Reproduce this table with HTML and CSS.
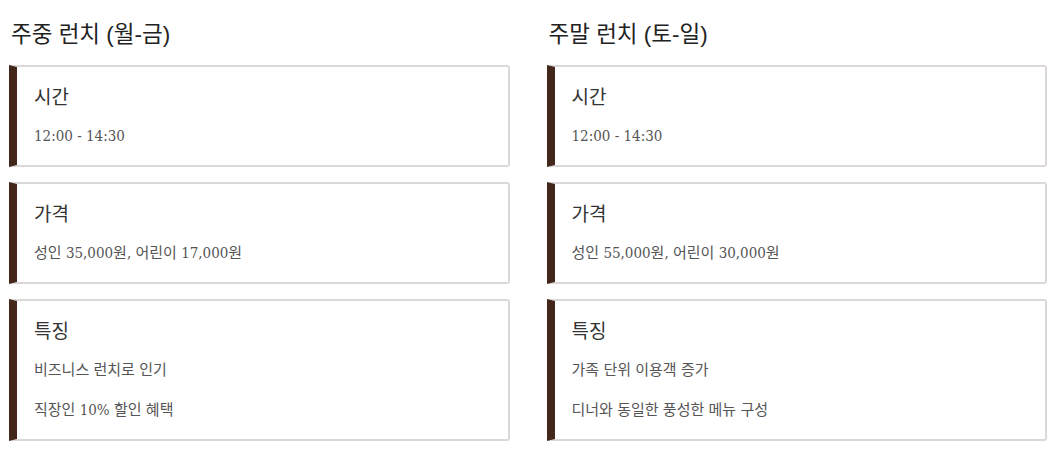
FILE: index.html
```html
<!DOCTYPE html>
<html lang="ko">
<head>
<meta charset="utf-8">
<link rel="stylesheet" href="styles.css">
</head>
<body>
<div class="grid">
  <section class="col">
    <h2 class="col-title">주중 런치 (월-금)</h2>
    <div class="card">
      <h3 class="card-title">시간</h3>
      <p class="card-text">12:00 - 14:30</p>
    </div>
    <div class="card">
      <h3 class="card-title">가격</h3>
      <p class="card-text">성인 35,000원, 어린이 17,000원</p>
    </div>
    <div class="card">
      <h3 class="card-title">특징</h3>
      <p class="card-text">비즈니스 런치로 인기</p>
      <p class="card-text">직장인 10% 할인 혜택</p>
    </div>
  </section>
  <section class="col">
    <h2 class="col-title">주말 런치 (토-일)</h2>
    <div class="card">
      <h3 class="card-title">시간</h3>
      <p class="card-text">12:00 - 14:30</p>
    </div>
    <div class="card">
      <h3 class="card-title">가격</h3>
      <p class="card-text">성인 55,000원, 어린이 30,000원</p>
    </div>
    <div class="card">
      <h3 class="card-title">특징</h3>
      <p class="card-text">가족 단위 이용객 증가</p>
      <p class="card-text">디너와 동일한 풍성한 메뉴 구성</p>
    </div>
  </section>
</div>
</body>
</html>
```
FILE: styles.css
```css
* { box-sizing: border-box; }
body {
  margin: 0;
  background: #fff;
  font-family: "DejaVu Serif Condensed", "DejaVu Serif", "Noto Sans CJK KR", serif;
  color: #333;
}
.grid {
  display: grid;
  grid-template-columns: 1fr 1fr;
  column-gap: 37px;
  padding: 20px 9px 0 9px;
}
.col {
  display: flex;
  flex-direction: column;
  gap: 15px;
}
.col-title {
  margin: 0 0 0 2px;
  font-family: "Liberation Sans", "Noto Sans CJK KR", sans-serif;
  font-weight: 400;
  font-size: 22.5px;
  line-height: 30px;
  color: #222;
}
.card {
  display: flex;
  flex-direction: column;
  gap: 18px;
  border: 2px solid #dcd8d8;
  border-left: 8px solid #42271a;
  border-radius: 0 3px 3px 0;
  padding: 17px 17px 18px 17px;
  background: #fff;
}
.card-title {
  margin: 0;
  font-family: "Noto Sans CJK KR", sans-serif;
  font-weight: 400;
  font-size: 19px;
  line-height: 23px;
  color: #333;
}
.card-text {
  margin: 0;
  font-size: 15px;
  font-stretch: condensed;
  line-height: 22px;
  color: #555;
}
```
